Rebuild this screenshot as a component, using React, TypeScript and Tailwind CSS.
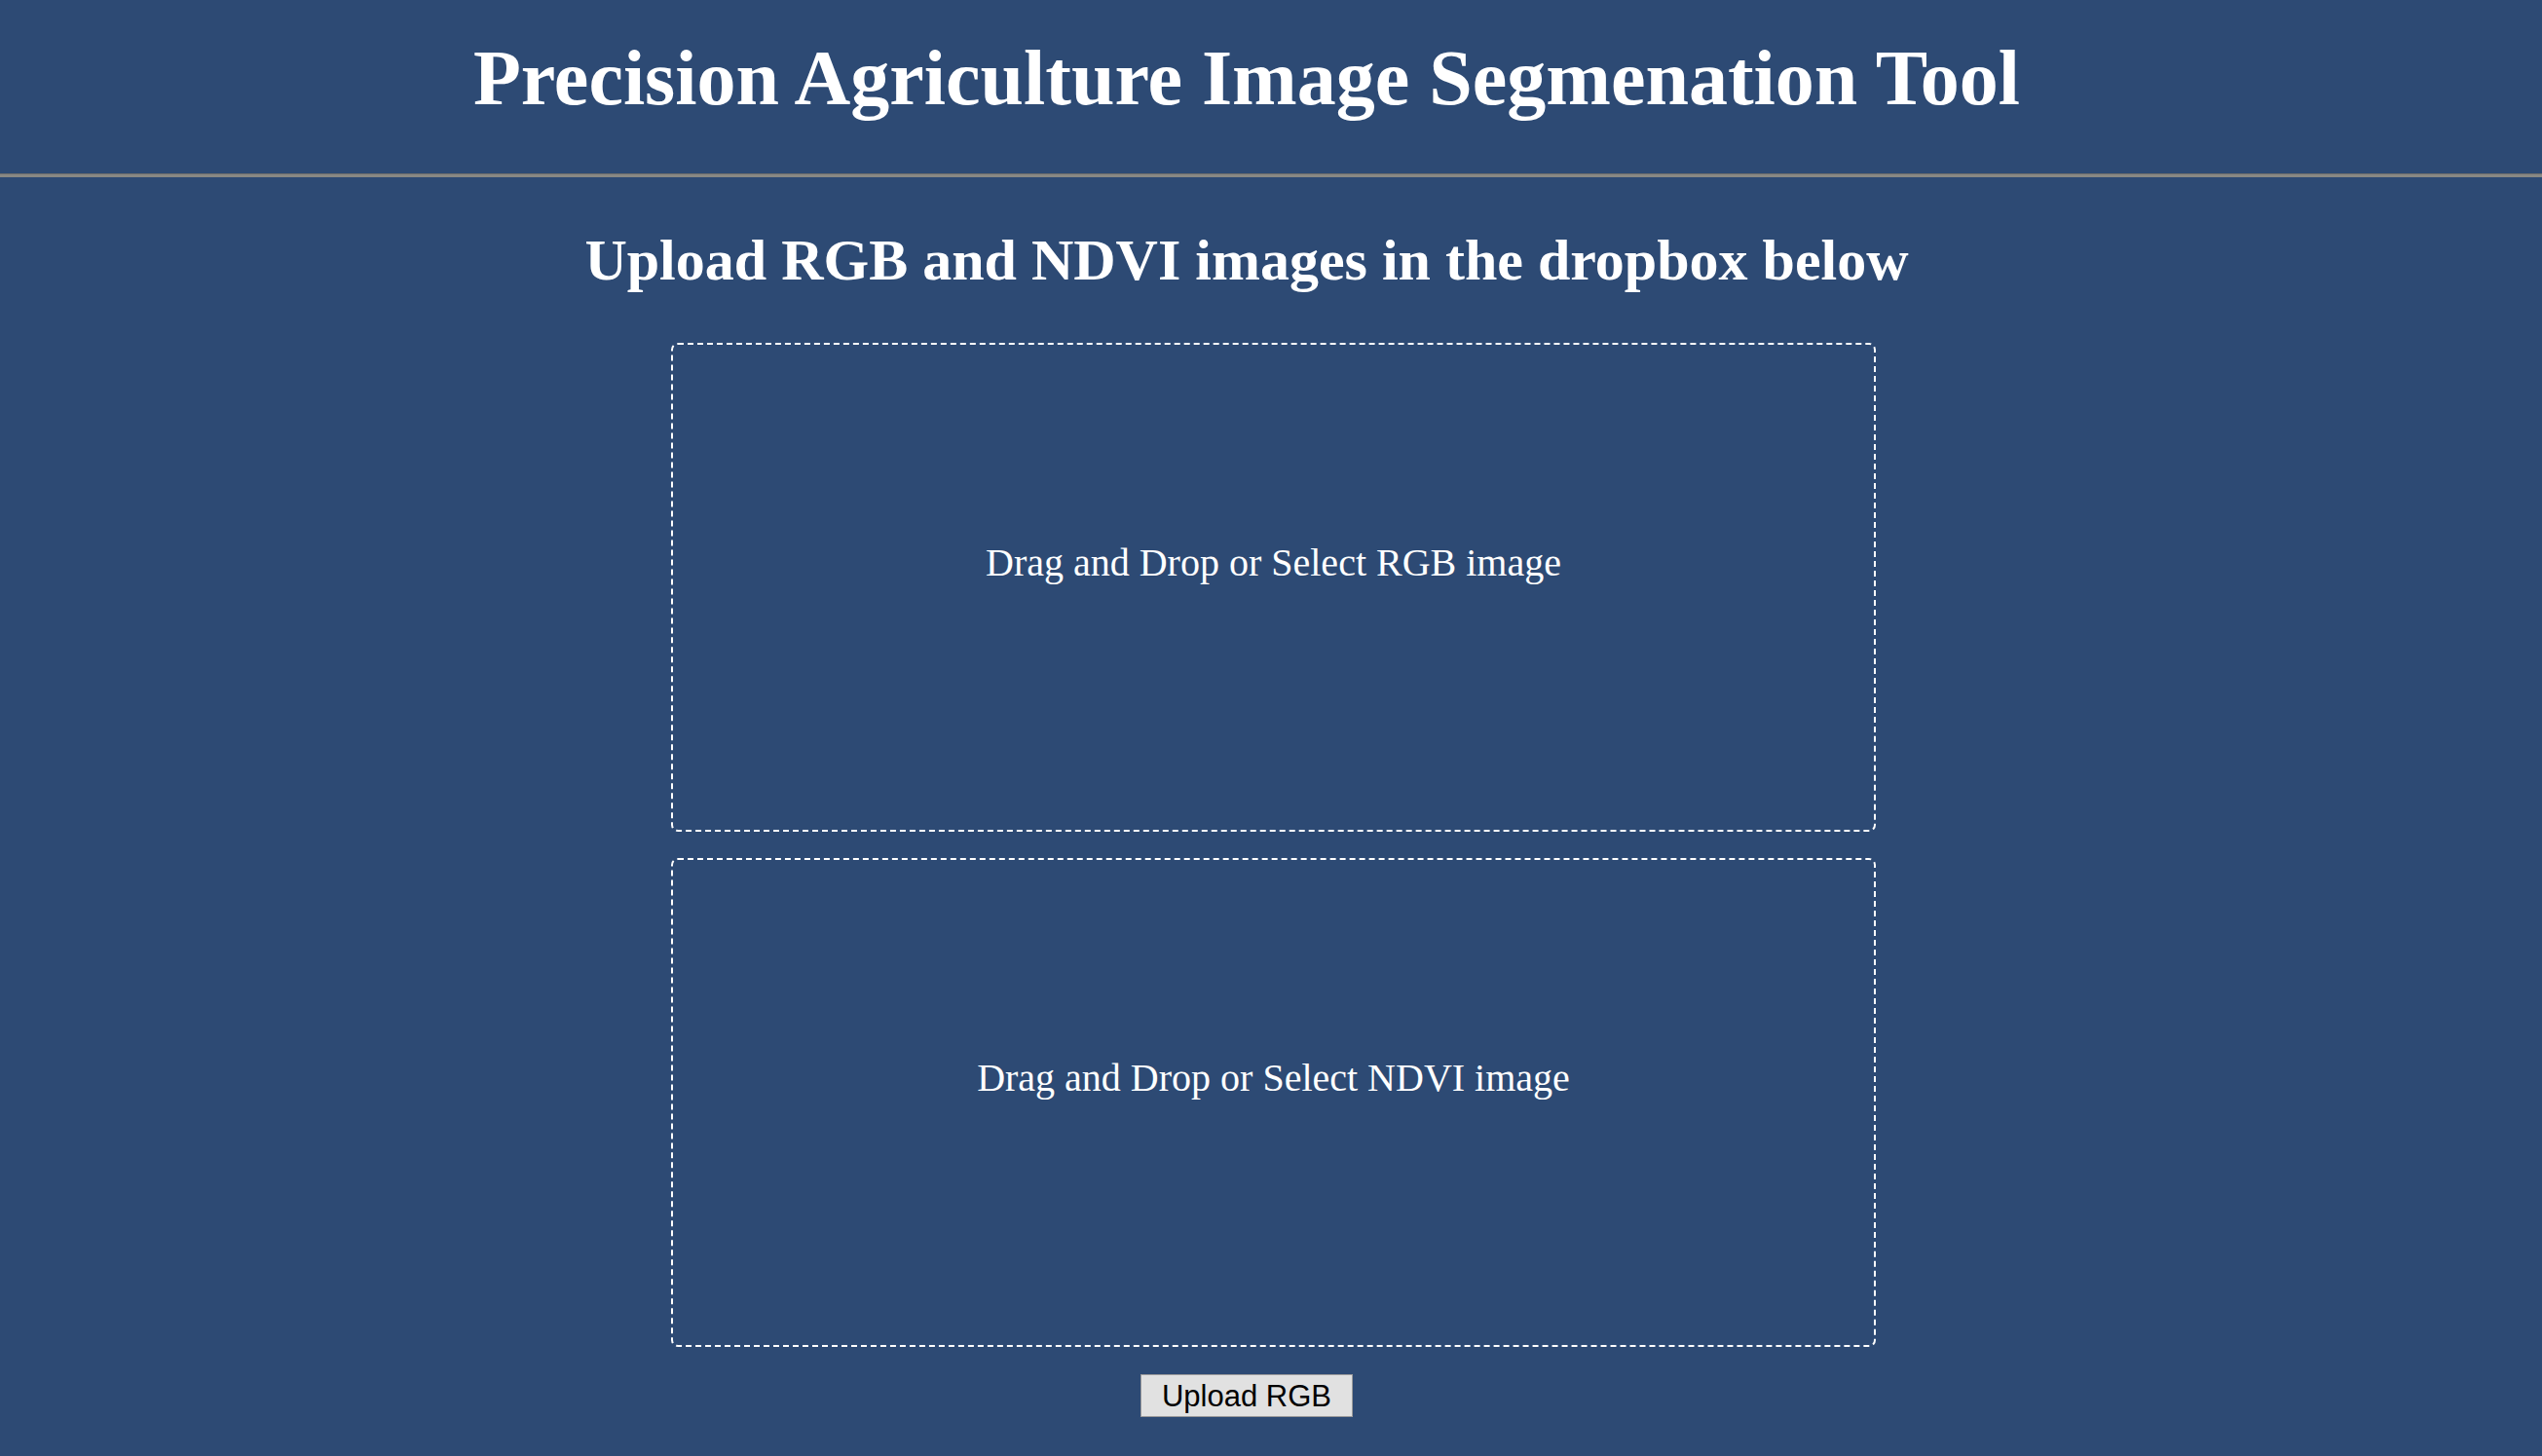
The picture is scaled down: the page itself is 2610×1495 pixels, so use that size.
export default function App() {
  const boxes = ["Drag and Drop or Select RGB image", "Drag and Drop or Select NDVI image"];

  return (
    <div className="min-h-screen w-full bg-[#2d4a74] font-['Liberation_Serif','Times_New_Roman',serif] text-white">
      {/* header */}
      <div className="flex justify-center pr-[50px] pt-[40px]">
        <h1 className="text-[80px] font-bold leading-none whitespace-nowrap">
          Precision Agriculture Image Segmenation Tool
        </h1>
      </div>
      <div className="mt-[58px] h-[4px] border-t border-[#6c6c6c] bg-[#888884]" />

      {/* upload area */}
      <div className="flex flex-col items-center pr-[50px]">
        <h2 className="mt-[55px] text-[60px] font-bold leading-none whitespace-nowrap">
          Upload RGB and NDVI images in the dropbox below
        </h2>

        <div className="mt-[55px] ml-[55px] flex flex-col gap-[27px]">
          {boxes.map((label) => (
            <div
              key={label}
              className="h-[502px] w-[1237px] rounded-[7px] border-2 border-dashed border-white pt-[204px] text-center"
            >
              <span className="text-[40px] leading-none">{label}</span>
            </div>
          ))}
        </div>

        <button className="mt-[28px] h-[44px] w-[218px] border border-[#9a9a9a] bg-[#e1e1e1] font-['Liberation_Sans',Arial,sans-serif] text-[31px] leading-none text-black">
          Upload RGB
        </button>
      </div>
    </div>
  );
}
